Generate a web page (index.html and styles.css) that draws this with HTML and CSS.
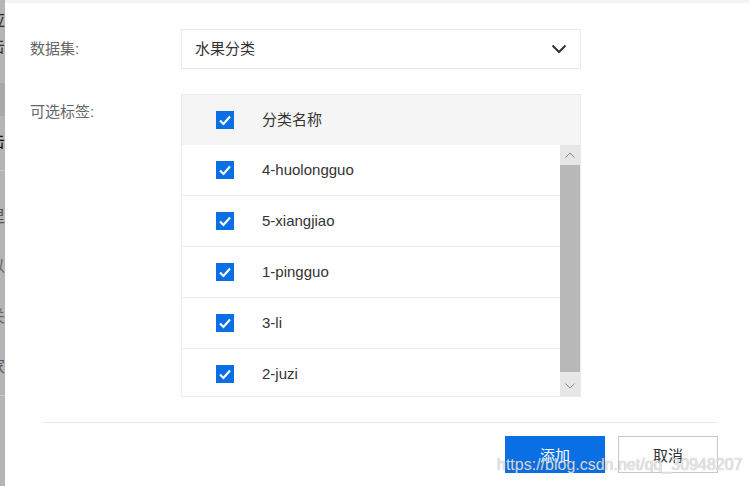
FILE: index.html
```html
<!DOCTYPE html>
<html lang="zh-CN">
<head>
<meta charset="utf-8">
<title>选择标签</title>
<link rel="stylesheet" href="styles.css">
</head>
<body>
<div class="page">
  <aside class="backdrop">
    <div class="frag f1"><span>应</span></div>
    <div class="frag f2"><span>击</span></div>
    <div class="band"></div>
    <div class="frag f3"><span>击</span></div>
    <div class="rule"></div>
    <div class="frag f4"><span>里</span></div>
    <div class="frag f5"><span>以</span></div>
    <div class="frag f6"><span>关</span></div>
    <div class="frag f7"><span>家</span></div>
    <div class="rule"></div>
  </aside>

  <main class="dialog">
    <div class="dialog-top"></div>

    <form class="form">
      <div class="field field-center">
        <label class="label">数据集:</label>
        <div class="select">
          <span class="select-value">水果分类</span>
          <svg class="chevron" width="16" height="10" viewBox="0 0 16 10"><polyline points="1.5,1.5 8,8 14.5,1.5" fill="none" stroke="#333" stroke-width="2"/></svg>
        </div>
      </div>

      <div class="field field-top">
        <label class="label label-top">可选标签:</label>
        <div class="table">
          <div class="thead">
            <span class="cell-check"><svg class="check" width="18" height="18" viewBox="0 0 18 18"><rect width="18" height="18" fill="#0a6fe4"/><polyline points="4,9.5 7.5,13 14,5.5" fill="none" stroke="#fff" stroke-width="2.2"/></svg></span>
            <span class="cell-name">分类名称</span>
          </div>
          <div class="tbody">
            <div class="rows">
              <div class="row">
                <span class="cell-check"><svg class="check" width="18" height="18" viewBox="0 0 18 18"><rect width="18" height="18" fill="#0a6fe4"/><polyline points="4,9.5 7.5,13 14,5.5" fill="none" stroke="#fff" stroke-width="2.2"/></svg></span>
                <span class="cell-name">4-huolongguo</span>
              </div>
              <div class="row">
                <span class="cell-check"><svg class="check" width="18" height="18" viewBox="0 0 18 18"><rect width="18" height="18" fill="#0a6fe4"/><polyline points="4,9.5 7.5,13 14,5.5" fill="none" stroke="#fff" stroke-width="2.2"/></svg></span>
                <span class="cell-name">5-xiangjiao</span>
              </div>
              <div class="row">
                <span class="cell-check"><svg class="check" width="18" height="18" viewBox="0 0 18 18"><rect width="18" height="18" fill="#0a6fe4"/><polyline points="4,9.5 7.5,13 14,5.5" fill="none" stroke="#fff" stroke-width="2.2"/></svg></span>
                <span class="cell-name">1-pingguo</span>
              </div>
              <div class="row">
                <span class="cell-check"><svg class="check" width="18" height="18" viewBox="0 0 18 18"><rect width="18" height="18" fill="#0a6fe4"/><polyline points="4,9.5 7.5,13 14,5.5" fill="none" stroke="#fff" stroke-width="2.2"/></svg></span>
                <span class="cell-name">3-li</span>
              </div>
              <div class="row">
                <span class="cell-check"><svg class="check" width="18" height="18" viewBox="0 0 18 18"><rect width="18" height="18" fill="#0a6fe4"/><polyline points="4,9.5 7.5,13 14,5.5" fill="none" stroke="#fff" stroke-width="2.2"/></svg></span>
                <span class="cell-name">2-juzi</span>
              </div>
            </div>
            <div class="scrollbar">
              <div class="sb-btn"><svg width="10" height="6" viewBox="0 0 10 6"><polyline points="0.5,5.5 5,1 9.5,5.5" fill="none" stroke="#8a8a8a" stroke-width="1"/></svg></div>
              <div class="sb-thumb"></div>
              <div class="sb-btn"><svg width="10" height="6" viewBox="0 0 10 6"><polyline points="0.5,0.5 5,5 9.5,0.5" fill="none" stroke="#8a8a8a" stroke-width="1"/></svg></div>
            </div>
          </div>
        </div>
      </div>
    </form>

    <footer class="footer">
      <div class="divider"></div>
      <div class="actions">
        <button type="button" class="btn btn-primary">添加</button>
        <button type="button" class="btn btn-default">取消</button>
      </div>
    </footer>

    <div class="watermark">https://blog.csdn.net/qq_30948207</div>
  </main>
</div>
</body>
</html>
```

FILE: styles.css
```css
* { box-sizing: border-box; }

html, body {
  margin: 0;
  padding: 0;
  background: #fff;
  width: 749px;
  height: 486px;
  overflow: hidden;
}

body {
  font-family: "Liberation Sans", "Noto Sans CJK SC", sans-serif;
  font-size: 15px;
  color: #333;
}

.page {
  display: flex;
  height: 486px;
}

/* backdrop strip on the left */
.backdrop {
  width: 5px;
  flex: none;
  background: #b5b5b5;
  display: flex;
  flex-direction: column;
  overflow: hidden;
}

.frag {
  height: 20px;
  display: flex;
  justify-content: flex-end;
  overflow: hidden;
  font-size: 16px;
  line-height: 20px;
  color: #2a2a2a;
}
.frag span { flex: none; }

.f1 { margin-top: 11px; }
.f2 { margin-top: 6px; color: #333; }
.band { height: 33px; margin-top: 26px; background: #a9a9a9; }
.f3 { margin-top: 16px; color: #111; }
.rule { height: 1px; background: #c9c9c9; margin-top: 18px; }
.f4 { margin-top: 36px; color: #555; }
.f5 { margin-top: 30px; color: #666; }
.f6 { margin-top: 30px; color: #666; }
.f7 { margin-top: 30px; color: #556; }

/* dialog */
.dialog {
  flex: 1;
  display: flex;
  flex-direction: column;
  position: relative;
  background: #fff;
}

.dialog-top {
  height: 3px;
  background: #f4f4f4;
}

.form {
  margin: 26px 0 0 0;
  padding-left: 25px;
  display: flex;
  flex-direction: column;
  gap: 25px;
}

.field {
  display: flex;
}
.field-center { align-items: center; }
.field-top { align-items: flex-start; }

.label {
  width: 151px;
  flex: none;
  color: #666;
  line-height: 20px;
}
.label-top { padding-top: 8px; }

.select {
  width: 400px;
  height: 40px;
  border: 1px solid #e9e9e9;
  display: flex;
  align-items: center;
  justify-content: space-between;
  padding: 0 13px 0 13px;
}
.select-value { color: #333; line-height: 20px; }
.chevron { display: block; }

/* table */
.table {
  width: 400px;
  border: 1px solid #ebebeb;
}

.thead {
  height: 50px;
  background: #f5f5f5;
  display: flex;
  align-items: center;
}

.cell-check {
  width: 80px;
  flex: none;
  padding-left: 34px;
  display: flex;
  align-items: center;
}
.check { display: block; }
.cell-name { color: #333; line-height: 20px; }

.tbody {
  height: 251px;
  display: flex;
  overflow: hidden;
}

.rows {
  flex: 1;
  overflow: hidden;
}

.row {
  height: 51px;
  border-bottom: 1px solid #ebebeb;
  display: flex;
  align-items: center;
}

.scrollbar {
  width: 20px;
  flex: none;
  display: flex;
  flex-direction: column;
  background: #e8e8e8;
}
.sb-btn {
  height: 20px;
  flex: none;
  display: flex;
  align-items: center;
  justify-content: center;
  background: #e6e6e6;
}
.sb-btn svg { display: block; }
.sb-thumb {
  flex: 1;
  background: #b8b8b8;
  margin-bottom: 4px;
}

/* footer */
.footer {
  margin: 25px 0 0 38px;
  width: 675px;
}
.divider {
  height: 1px;
  background: #e7e9f3;
}
.actions {
  margin-top: 13px;
  display: flex;
  justify-content: flex-end;
  gap: 13px;
}
.btn {
  width: 100px;
  height: 37px;
  font-family: "Liberation Sans", "Noto Sans CJK SC", sans-serif;
  font-size: 15px;
  padding: 0;
  cursor: pointer;
}
.btn-primary {
  background: #0a6fe4;
  border: 1px solid #0a6fe4;
  color: #fff;
}
.btn-default {
  background: #fff;
  border: 1px solid #c8c8c8;
  color: #333;
}

.watermark {
  position: absolute;
  left: 492px;
  top: 455px;
  font-family: "Liberation Sans", sans-serif;
  font-size: 16px;
  line-height: 20px;
  color: rgba(238, 238, 238, 0.85);
  text-shadow: 0 0 1px rgba(90, 90, 90, 0.55);
  white-space: nowrap;
  pointer-events: none;
}
```
